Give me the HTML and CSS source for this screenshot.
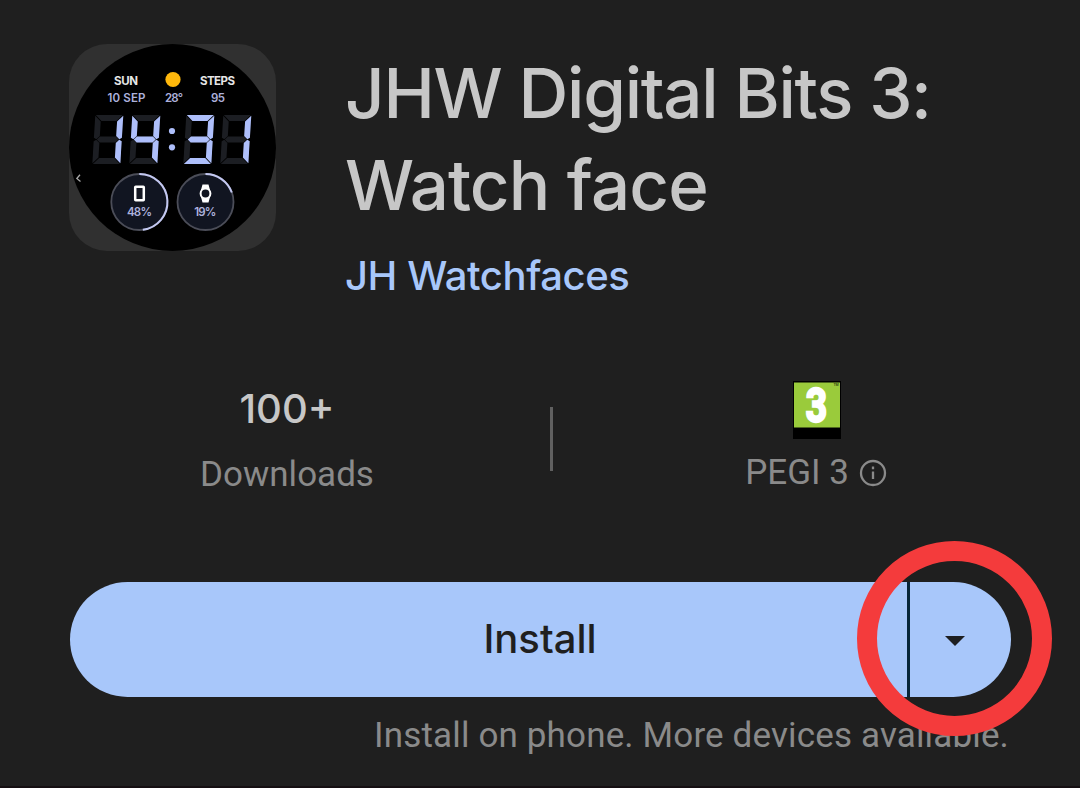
FILE: index.html
```html
<!DOCTYPE html>
<html lang="en">
<head>
<meta charset="utf-8">
<title>JHW Digital Bits 3: Watch face</title>
<link rel="stylesheet" href="styles.css">
</head>
<body>
<main class="page">
  <header class="header">
    <svg class="app-icon" viewBox="69 44 207 207" role="img" aria-label="Watch face showing 14:31">
      <defs>
        <path id="sa" d="M.5 0H27.500L21.500 6H6.500Z"/>
        <path id="sb" d="M28 .7V22.800L25.500 24.200L22.200 21V6.500Z"/>
        <path id="sc" d="M28 48.300V26.200L25.500 24.800L22.200 28V42.500Z"/>
        <path id="sd" d="M.5 49H27.500L21.500 43H6.500Z"/>
        <path id="se" d="M0 48.300V26.200L2.500 24.800L5.800 28V42.500Z"/>
        <path id="sf" d="M0 .7V22.800L2.500 24.200L5.800 21V6.500Z"/>
        <path id="sg" d="M3 24.500L6 21.600H22L25 24.500L22 27.400H6Z"/>
        <g id="ghost"><use href="#sa"/><use href="#sb"/><use href="#sc"/><use href="#sd"/><use href="#se"/><use href="#sf"/><use href="#sg"/></g>
      </defs>
      <rect class="tile" x="69" y="44" width="207" height="207" rx="38"/>
      <circle cx="172.500" cy="147.500" r="103.500"/>
      <g class="dial-text">
        <text class="bright" x="126" y="84.600" textLength="24">SUN</text>
        <text class="bright" x="217.500" y="84.600" textLength="35">STEPS</text>
        <text x="126.500" y="102.300" textLength="38">10 SEP</text>
        <text x="174" y="102.300" textLength="18">28°</text>
        <text x="218" y="102.300" textLength="14">95</text>
      </g>
      <circle class="sun" cx="173" cy="79.500" r="7.600"/>
      <g class="digits">
        <g transform="translate(95.300 115) skewX(-3.500)"><use class="off" href="#ghost"/><use href="#sb"/><use href="#sc"/></g>
        <g transform="translate(132.300 115) skewX(-3.500)"><use class="off" href="#ghost"/><use href="#sf"/><use href="#sg"/><use href="#sb"/><use href="#sc"/></g>
        <g transform="translate(186.300 115) skewX(-3.500)"><use class="off" href="#ghost"/><use href="#sa"/><use href="#sb"/><use href="#sg"/><use href="#sc"/><use href="#sd"/></g>
        <g transform="translate(223.300 115) skewX(-3.500)"><use class="off" href="#ghost"/><use href="#sb"/><use href="#sc"/></g>
        <circle cx="172" cy="131" r="3.100"/><circle cx="172" cy="147.300" r="3.100"/>
      </g>
      <path class="chevron" d="M80 174.800L76.800 178.500L80.500 181.500"/>
      <g class="gauge">
        <circle cx="139.300" cy="202" r="28"/><circle cx="205.500" cy="202" r="28"/>
        <path class="level" d="M139.300 174A28 28 0 0 1 142.800 229.800"/>
        <path class="level" d="M205.500 174A28 28 0 0 1 231.800 192.500"/>
      </g>
      <rect class="phone" x="135.200" y="186.700" width="8.600" height="13.500" rx=".5"/>
      <path fill="#fff" d="M202.500 184.500h6l1.500 5.500h-9zM202.500 202.500h6l1.500-5.500h-9z"/>
      <circle class="watch" cx="205.500" cy="193.500" r="4.900"/>
      <g class="dial-text"><text x="139.500" y="216.300" textLength="25">48%</text><text x="205.300" y="216.300" textLength="22">19%</text></g>
    </svg>
    <div class="heading">
      <h1 class="title"><span class="title-a">JHW Digital Bits 3:</span><br><span class="title-b">Watch face</span></h1>
      <p class="developer">JH Watchfaces</p>
    </div>
  </header>

  <section class="stats">
    <div class="stat">
      <strong class="stat-value">100+</strong>
      <span class="stat-label downloads">Downloads</span>
    </div>
    <div class="divider"></div>
    <div class="stat stat-rating">
      <svg class="pegi" viewBox="0 0 48 58">
        <rect width="48" height="58" fill="#000"/>
        <rect x="1" y="1.500" width="46" height="45" fill="#9acb3b"/>
        <text class="pegi-num" transform="translate(23.500 41.300) scale(.76 1)">3</text>
        <text class="pegi-tm" x="40.500" y="5">TM</text>
      </svg>
      <span class="stat-label rating"><span class="pegi-label">PEGI 3</span>
        <svg class="info" viewBox="0 0 28 28"><circle cx="14" cy="14" r="12"/><path d="M14 12.500V20M14 7.500V10.200"/></svg>
      </span>
    </div>
  </section>

  <div class="install">
    <button class="install-main"><span>Install</span></button>
    <button class="install-more" aria-label="More devices"><svg width="20" height="10" viewBox="0 0 20 10"><path d="M0 0H20L10 10Z" fill="#1d1f21"/></svg></button>
    <div class="highlight"></div>
  </div>
  <p class="caption"><span>Install on phone. More devices available.</span></p>
</main>
</body>
</html>
```
FILE: styles.css
```css
* { box-sizing: border-box; }
body { margin: 0; background: #1f1f1f; font-family: Inter, Roboto, sans-serif; }
.page { width: 1080px; height: 788px; padding-top: 44px; overflow: hidden; border-bottom: 2px solid #150f12; white-space: nowrap; }
.header { display: flex; gap: 69px; height: 336px; padding-left: 69px; }
.app-icon { width: 207px; height: 207px; flex: none; }
.tile { fill: #303030; }
.dial-text { font: 600 11.5px Inter, sans-serif; fill: #adb1dc; text-anchor: middle; }
.bright { fill: #e6e6e6; font-weight: 700; }
.sun { fill: #ffb80c; }
.digits { fill: #aebffb; }
.off { fill: #1c1e23; }
.chevron { fill: none; stroke: #aaa; stroke-width: 1.3; }
.gauge circle { fill: #111521; stroke: #4b4d58; stroke-width: 1.8; }
.level { fill: none; stroke: #c3c8f1; stroke-width: 2; }
.phone { fill: #151823; stroke: #fff; stroke-width: 2.500px; }
.watch { fill: #111521; stroke: #fff; stroke-width: 2; }
.title { margin: 3px 0 0; font-size: 69px; line-height: 92px; font-weight: 500; color: #c7c7c7; }
.title-a { letter-spacing: -1.28px; }
.title-b { letter-spacing: -0.9px; }
.developer { margin: 20px 0 0; font-size: 40px; line-height: 50px; font-weight: 500; letter-spacing: -0.42px; color: #a8c7fa; }
.stats { display: flex; height: 202px; padding-left: 24px; }
.stat { width: 526px; display: flex; flex-direction: column; align-items: center; }
.stat-value { margin-top: 4px; font-size: 40px; line-height: 50px; font-weight: 500; color: #c7c7c7; }
.stat-label { font: 400 35px/40px Roboto, sans-serif; color: #8a8a8a; }
.downloads { margin-top: 21px; }
.divider { width: 3px; height: 64px; margin-top: 27px; background: #606060; }
.pegi { width: 48px; height: 58px; margin: 1px 0 0 2px; }
.pegi-num { font: 700 49px Roboto, sans-serif; fill: #fff; stroke: #fff; stroke-width: 2.5px; text-anchor: middle; }
.pegi-tm { font: 3.5px Roboto, sans-serif; fill: #000; }
.rating { display: flex; align-items: center; gap: 10px; margin-top: 14px; }
.info { width: 28px; height: 28px; fill: none; stroke: #8a8a8a; stroke-width: 2.3; }
.install { position: relative; display: flex; gap: 3px; width: 941px; height: 115px; margin-left: 70px; border-radius: 58px; background: linear-gradient(90deg, transparent 800px, #062538 800px, #062538 860px, transparent 860px); }
.install button { border: 0; padding: 0; background: #a8c7fa; color: #1f1f1f; }
.install .install-main { width: 837px; padding: 0 0 2px 103px; border-radius: 58px 0 0 58px; font: 500 40px Inter, sans-serif; }
.install-more { width: 101px; border-radius: 0 58px 58px 0; }
.install-more svg { display: block; margin: 2px 0 0 35px; }
.highlight { position: absolute; left: 787px; top: -41px; width: 195px; height: 195px; border: 20px solid #f43b3c; border-radius: 50%; }
.caption { margin: 19px 0 0; padding-right: 71px; text-align: right; font: 400 35px/40px Roboto, sans-serif; letter-spacing: 0.15px; color: #8a8a8a; }
```
